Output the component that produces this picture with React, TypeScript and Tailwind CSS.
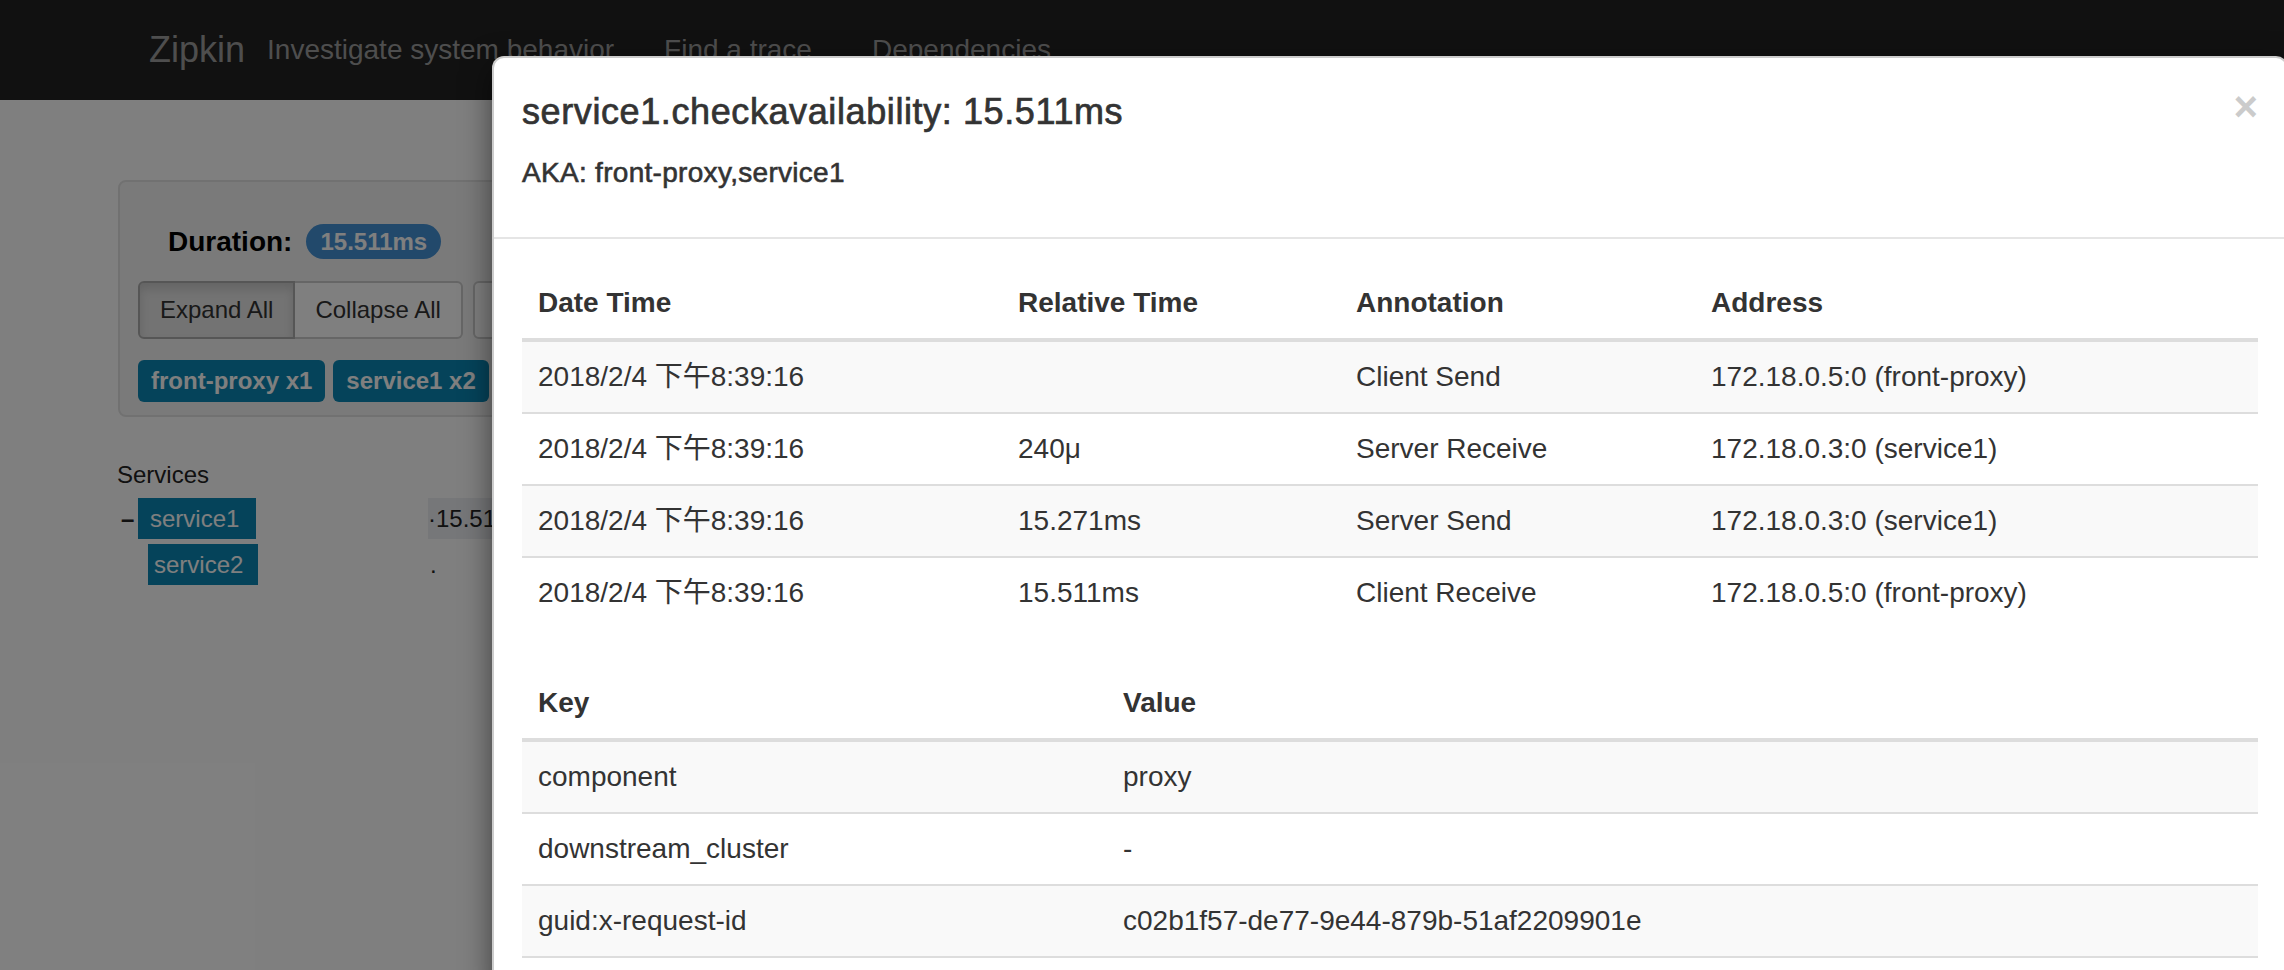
import React from "react";

const annotations = [
  { date: "2018/2/4 下午8:39:16", rel: "", ann: "Client Send", addr: "172.18.0.5:0 (front-proxy)" },
  { date: "2018/2/4 下午8:39:16", rel: "240μ", ann: "Server Receive", addr: "172.18.0.3:0 (service1)" },
  { date: "2018/2/4 下午8:39:16", rel: "15.271ms", ann: "Server Send", addr: "172.18.0.3:0 (service1)" },
  { date: "2018/2/4 下午8:39:16", rel: "15.511ms", ann: "Client Receive", addr: "172.18.0.5:0 (front-proxy)" },
];

const binaryAnnotations = [
  { key: "component", value: "proxy" },
  { key: "downstream_cluster", value: "-" },
  { key: "guid:x-request-id", value: "c02b1f57-de77-9e44-879b-51af2209901e" },
];

const th = "px-[16px] py-[16px] leading-[38px] text-left font-bold border-b-4 border-[#ddd]";
const td = "px-[16px] py-[16px] leading-[38px] border-t-2 border-[#ddd]";

const Navbar = () => (
  <nav className="h-[100px] bg-[#222] flex items-start text-[#9d9d9d]">
    <a className="ml-[149px] pt-[30px] text-[36px] leading-[40px]">Zipkin</a>
    <span className="ml-[22px] pt-[30px] text-[28px] leading-[40px]">Investigate system behavior</span>
    <a className="ml-[50px] pt-[30px] text-[28px] leading-[40px]">Find a trace</a>
    <a className="ml-[60px] pt-[30px] text-[28px] leading-[40px]">Dependencies</a>
  </nav>
);

const TracePage = () => (
  <div className="bg-white">
    <div className="pl-[118px] pt-[80px]">
      {/* trace summary well */}
      <div className="w-[1930px] rounded-[8px] border-2 border-[#e3e3e3] bg-[#f5f5f5] pt-[42px] pb-[13px] pl-[18px] flex flex-col">
        <div className="ml-[30px] h-[35px] flex items-center">
          <span className="text-[28px] leading-none font-bold text-black">Duration:</span>
          <span className="ml-[14px] h-[35px] px-[14px] rounded-full bg-[#4592d6] text-white text-[24px] font-bold flex items-center">
            15.511ms
          </span>
        </div>
        <div className="mt-[22px] flex text-[24px] text-[#333]">
          <div className="flex">
            <button className="h-[58px] px-[20px] border-2 border-[#adadad] bg-[#e6e6e6] rounded-l-[6px] shadow-[inset_0_6px_10px_rgba(0,0,0,0.125)]">
              Expand All
            </button>
            <button className="h-[58px] px-[20px] border-2 border-l-0 border-[#ccc] bg-white rounded-r-[6px]">
              Collapse All
            </button>
          </div>
          {/* next control, mostly hidden under the modal */}
          <button className="ml-[10px] h-[58px] w-[160px] border-2 border-[#ccc] bg-white rounded-[6px]" />
        </div>
        <div className="mt-[21px] flex gap-[8px] text-[24px] font-bold text-white">
          <span className="h-[42px] px-[13px] rounded-[6px] bg-[#0b87b4] flex items-center">front-proxy x1</span>
          <span className="h-[42px] px-[13px] rounded-[6px] bg-[#0b87b4] flex items-center">service1 x2</span>
        </div>
      </div>
    </div>

    <div className="pl-[117px] mt-[41px] text-[24px] text-[#222]">
      <div className="leading-[34px]">Services</div>
      <div className="mt-[6px] h-[41px] flex items-center">
        <span className="ml-[4px] w-[17px] font-bold leading-none">–</span>
        <span className="w-[118px] h-[41px] pl-[12px] bg-[#0b87b4] text-white leading-none flex items-center">service1</span>
        <span className="ml-[172px] w-[300px] h-[41px] bg-[#eceff2] leading-none flex items-center">·15.511ms</span>
      </div>
      <div className="mt-[5px] h-[41px] flex items-center">
        <span className="ml-[31px] w-[110px] h-[41px] pl-[6px] bg-[#0b87b4] text-white leading-none flex items-center">service2</span>
        <span className="ml-[172px] leading-none">.</span>
      </div>
    </div>
  </div>
);

const SpanModal = () => (
  <div className="absolute left-[492px] top-[56px] z-20 w-[1796px] rounded-[12px] border-2 border-black/20 bg-white shadow-[0_10px_30px_rgba(0,0,0,0.5)] text-[#333]">
    <div className="px-[28px] pt-[28px] pb-[29px] border-b-2 border-[#e5e5e5] flex justify-between items-start">
      <div>
        <h4 className="text-[36px] leading-[51px] font-medium tracking-[0.6px] [-webkit-text-stroke:0.7px_#333]">
          service1.checkavailability: 15.511ms
        </h4>
        <h5 className="mt-[20px] mb-[20px] text-[28px] leading-[31px] font-medium tracking-[0.3px] [-webkit-text-stroke:0.6px_#333]">
          AKA: front-proxy,service1
        </h5>
      </div>
      <button className="text-[42px] leading-none font-bold text-black opacity-20">×</button>
    </div>

    <div className="px-[28px] pt-[29px] pb-[30px] text-[28px]">
      <table className="w-[1736px] border-collapse">
        <thead>
          <tr>
            <th className={`${th} w-[480px]`}>Date Time</th>
            <th className={`${th} w-[338px]`}>Relative Time</th>
            <th className={`${th} w-[355px]`}>Annotation</th>
            <th className={th}>Address</th>
          </tr>
        </thead>
        <tbody>
          {annotations.map((a, i) => (
            <tr key={i} className={i % 2 === 0 ? "bg-[#f9f9f9]" : "bg-white"}>
              <td className={td}>{a.date}</td>
              <td className={td}>{a.rel}</td>
              <td className={td}>{a.ann}</td>
              <td className={td}>{a.addr}</td>
            </tr>
          ))}
        </tbody>
      </table>

      <table className="mt-[40px] w-[1736px] border-collapse">
        <thead>
          <tr>
            <th className={`${th} w-[585px]`}>Key</th>
            <th className={th}>Value</th>
          </tr>
        </thead>
        <tbody>
          {binaryAnnotations.map((b, i) => (
            <tr key={b.key} className={i % 2 === 0 ? "bg-[#f9f9f9]" : "bg-white"}>
              <td className={`${td} border-b-2`}>{b.key}</td>
              <td className={`${td} border-b-2`}>{b.value}</td>
            </tr>
          ))}
        </tbody>
      </table>
    </div>
  </div>
);

export default function App() {
  return (
    <div className="relative w-[2284px] h-[970px] overflow-hidden bg-white font-['Liberation_Sans','Noto_Sans_CJK_SC',sans-serif]">
      <Navbar />
      <TracePage />
      {/* modal backdrop */}
      <div className="absolute inset-0 z-10 bg-black/50" />
      <SpanModal />
    </div>
  );
}
